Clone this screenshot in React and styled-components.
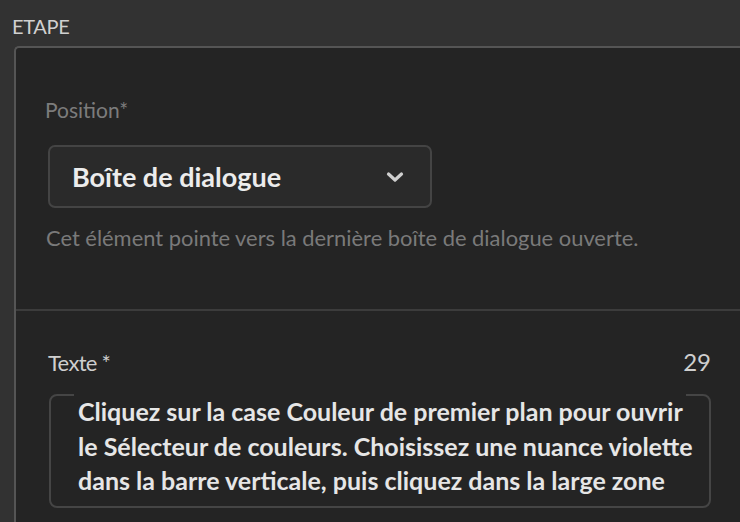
import React from "react";
import styled, { createGlobalStyle } from "styled-components";

const GlobalStyle = createGlobalStyle`
  html, body {
    margin: 0;
    padding: 0;
    background: #323232;
    font-family: Lato, "Open Sans", sans-serif;
    overflow: hidden;
  }
`;

const Page = styled.div`
  width: 740px;
  height: 522px;
  display: flex;
  flex-direction: column;
  overflow: hidden;
`;

const Heading = styled.div`
  height: 46px;
  box-sizing: border-box;
  padding: 14px 0 0 12px;
  font-size: 20px;
  line-height: 24px;
  color: #d0d0d0;
  letter-spacing: -0.3px;
`;

const Panel = styled.div`
  flex: 1;
  margin-left: 14px;
  background: #242424;
  border-top: 2px solid #555;
  border-left: 2px solid #555;
  border-top-left-radius: 5px;
  display: flex;
  flex-direction: column;
`;

const Section = styled.div`
  display: flex;
  flex-direction: column;
  padding: ${(p) => p.$pad};
  border-bottom: ${(p) => (p.$divider ? "2px solid #3c3c3c" : "none")};
`;

const FieldLabel = styled.div`
  font-size: ${(p) => p.$size || "21px"};
  color: ${(p) => p.$color};
  line-height: 24px;
  letter-spacing: ${(p) => p.$tight || "0"};
`;

const LabelRow = styled.div`
  display: flex;
  justify-content: space-between;
  align-items: flex-end;
  padding: 0 29px 0 32px;
`;

const Counter = styled.div`
  font-size: 24px;
  color: #cfcfcf;
  line-height: 26px;
`;

const Select = styled.div`
  margin: 23px 0 0 3px;
  width: 384px;
  height: 63px;
  box-sizing: border-box;
  border: 2px solid #444;
  border-radius: 7px;
  background: #2a2a2a;
  display: flex;
  align-items: center;
  justify-content: space-between;
  padding: 0 26px 0 22px;
  font-size: 27px;
  font-weight: 700;
  color: #ececec;
`;

const Helper = styled.div`
  margin: 18px 0 0 1px;
  font-size: 21.9px;
  color: #7a7a7a;
  line-height: 24px;
`;

const TextBox = styled.div`
  margin: 19px 29px 0 33px;
  height: 114px;
  box-sizing: border-box;
  border: 2px solid #454545;
  border-radius: 8px;
  padding: 0 23px 0 23px;
`;

const TextContent = styled.div`
  margin-top: -2px;
  background: #242424;
  padding: 0 4px;
  font-size: 25px;
  font-weight: 700;
  line-height: 34.5px;
  color: #e6e6e6;
  white-space: nowrap;
`;

const Chevron = () => (
  <svg width="18" height="12" viewBox="0 0 18 12" fill="none">
    <path
      d="M2.5 3 L9 9 L15.5 3"
      stroke="#cfcfcf"
      strokeWidth="3.2"
      strokeLinecap="round"
      strokeLinejoin="round"
    />
  </svg>
);

export default function App() {
  return (
    <>
      <GlobalStyle />
      <Page>
        <Heading>ETAPE</Heading>
        <Panel>
          <Section $pad="50px 0 59px 29px" $divider>
            <FieldLabel $color="#7c7c7c">Position*</FieldLabel>
            <Select>
              <span>Boîte de dialogue</span>
              <Chevron />
            </Select>
            <Helper>Cet élément pointe vers la dernière boîte de dialogue ouverte.</Helper>
          </Section>
          <Section $pad="38px 0 0 0">
            <LabelRow>
              <FieldLabel $color="#cfcfcf" $size="22px" $tight="-0.7px">
                Texte *
              </FieldLabel>
              <Counter>29</Counter>
            </LabelRow>
            <TextBox>
              <TextContent>
                Cliquez sur la case Couleur de premier plan pour ouvrir
                <br />
                le Sélecteur de couleurs. Choisissez une nuance violette
                <br />
                dans la barre verticale, puis cliquez dans la large zone
              </TextContent>
            </TextBox>
          </Section>
        </Panel>
      </Page>
    </>
  );
}
